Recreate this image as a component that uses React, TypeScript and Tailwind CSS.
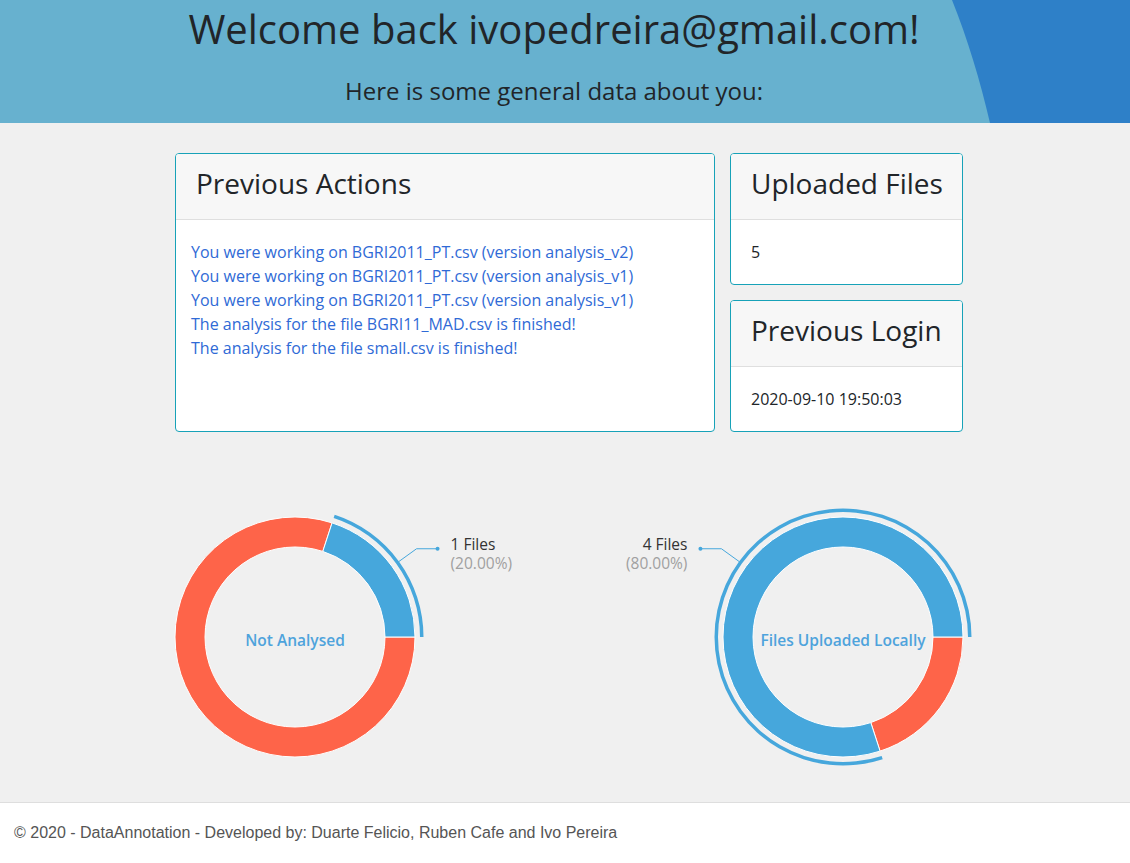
import React from "react";

const BLUE = "#46a7dc";
const RED = "#fe6449";

function pt(cx: number, cy: number, r: number, a: number) {
  const rad = (a * Math.PI) / 180;
  return [cx + r * Math.cos(rad), cy + r * Math.sin(rad)];
}

// annular sector, angles in degrees clockwise from 3 o'clock
function arc(cx: number, cy: number, r0: number, r1: number, a0: number, a1: number) {
  const large = a1 - a0 > 180 ? 1 : 0;
  const [x1, y1] = pt(cx, cy, r1, a0);
  const [x2, y2] = pt(cx, cy, r1, a1);
  const [x3, y3] = pt(cx, cy, r0, a1);
  const [x4, y4] = pt(cx, cy, r0, a0);
  return `M${x1} ${y1} A${r1} ${r1} 0 ${large} 1 ${x2} ${y2} L${x3} ${y3} A${r0} ${r0} 0 ${large} 0 ${x4} ${y4} Z`;
}

type DonutProps = {
  cx: number;
  label: string;
  blue: [number, number];
  red: [number, number];
  files: string;
  pct: string;
  side: "left" | "right";
};

function Donut({ cx, label, blue, red, files, pct, side }: DonutProps) {
  const cy = 140;
  const mid = (blue[0] + blue[1]) / 2;
  const [lx, ly] = pt(cx, cy, 128, mid);
  const dir = side === "right" ? 1 : -1;
  const ex = lx + 18 * dir;
  const ey = ly - 13;
  const dx = ex + 21 * dir;
  const anchor = side === "right" ? "start" : "end";
  const font = { fontFamily: "'Open Sans', sans-serif" };
  return (
    <svg width="394" height="280" className="overflow-visible">
      <path d={arc(cx, cy, 90, 120, red[0], red[1])} fill={RED} stroke="#fff" strokeWidth="1" />
      <path d={arc(cx, cy, 90, 120, blue[0], blue[1])} fill={BLUE} stroke="#fff" strokeWidth="1" />
      <path d={arc(cx, cy, 125, 128.5, blue[0], blue[1])} fill={BLUE} />
      <polyline points={`${lx},${ly} ${ex},${ey} ${dx},${ey}`} fill="none" stroke={BLUE} strokeWidth="1" />
      <circle cx={dx} cy={ey} r="2" fill={BLUE} />
      <text x={dx + 13 * dir} y={ey + 1} textAnchor={anchor} fontSize="15.5" fill="#333" style={font}>
        {files}
      </text>
      <text x={dx + 13 * dir} y={ey + 20} textAnchor={anchor} fontSize="15.5" fill="#a0a0a0" style={font}>
        {pct}
      </text>
      <text x={cx} y={cy + 9} textAnchor="middle" fontSize="15.5" fontWeight="600" fill="#4ea3dc" style={font}>
        {label}
      </text>
    </svg>
  );
}

function Card({ title, children, className, bodyClass }: { title: string; children: React.ReactNode; className?: string; bodyClass?: string }) {
  return (
    <div className={`flex flex-col rounded border border-[#17a2b8] bg-white overflow-hidden ${className ?? ""}`}>
      <div className="h-[66px] shrink-0 whitespace-nowrap border-b border-[#dfdfdf] bg-[#f7f7f7] px-5 pt-3 text-[28px] leading-[34px] text-[#212529]">
        {title}
      </div>
      <div className={`flex-1 py-5 text-base leading-6 ${bodyClass ?? "px-5"}`}>{children}</div>
    </div>
  );
}

const actions = [
  "You were working on BGRI2011_PT.csv (version analysis_v2)",
  "You were working on BGRI2011_PT.csv (version analysis_v1)",
  "You were working on BGRI2011_PT.csv (version analysis_v1)",
  "The analysis for the file BGRI11_MAD.csv is finished!",
  "The analysis for the file small.csv is finished!",
];

export default function App() {
  return (
    <div className="min-h-screen bg-[#f0f0f0] font-['Open_Sans',sans-serif] text-[#212529]">
      <header className="relative h-[123px] overflow-hidden bg-[#67b1cf]">
        <svg className="absolute right-0 top-0" width="180" height="123" viewBox="0 0 180 123">
          <path d="M2 0 C 18 40, 30 80, 40 123 L180 123 L180 0 Z" fill="#2e80c8" />
        </svg>
        <div className="relative flex flex-col items-center pr-[22px]">
          <h1 className="mt-[5px] text-[40px] leading-[48px]">Welcome back ivopedreira@gmail.com!</h1>
          <p className="mt-[23px] text-[24px] leading-[29px]">Here is some general data about you:</p>
        </div>
      </header>

      <main className="ml-[175px] w-[788px] pt-[30px]">
        <div className="flex gap-[15px]">
          <Card title="Previous Actions" className="w-[540px]" bodyClass="px-[15px]">
            {actions.map((a, i) => (
              <div key={i} className="text-[#2f6ad6]">{a}</div>
            ))}
          </Card>
          <div className="flex w-[233px] flex-col gap-[15px]">
            <Card title="Uploaded Files" className="h-[132px]">5</Card>
            <Card title="Previous Login" className="h-[132px]">2020-09-10 19:50:03</Card>
          </div>
        </div>

        <div className="mt-[65px] flex justify-between">
          <Donut cx={120} label="Not Analysed" blue={[-72, 0]} red={[0, 288]} files="1 Files" pct="(20.00%)" side="right" />
          <Donut cx={274} label="Files Uploaded Locally" blue={[72, 360]} red={[0, 72]} files="4 Files" pct="(80.00%)" side="left" />
        </div>
      </main>

      <footer className="mt-[25px] h-[61px] border-t border-[#dedede] bg-white px-[14px] pt-[20px] font-['Liberation_Sans',Arial,sans-serif] text-[16px] leading-[20px] text-[#555]">
        © 2020 - DataAnnotation - Developed by: Duarte Felicio, Ruben Cafe and Ivo Pereira
      </footer>
    </div>
  );
}
